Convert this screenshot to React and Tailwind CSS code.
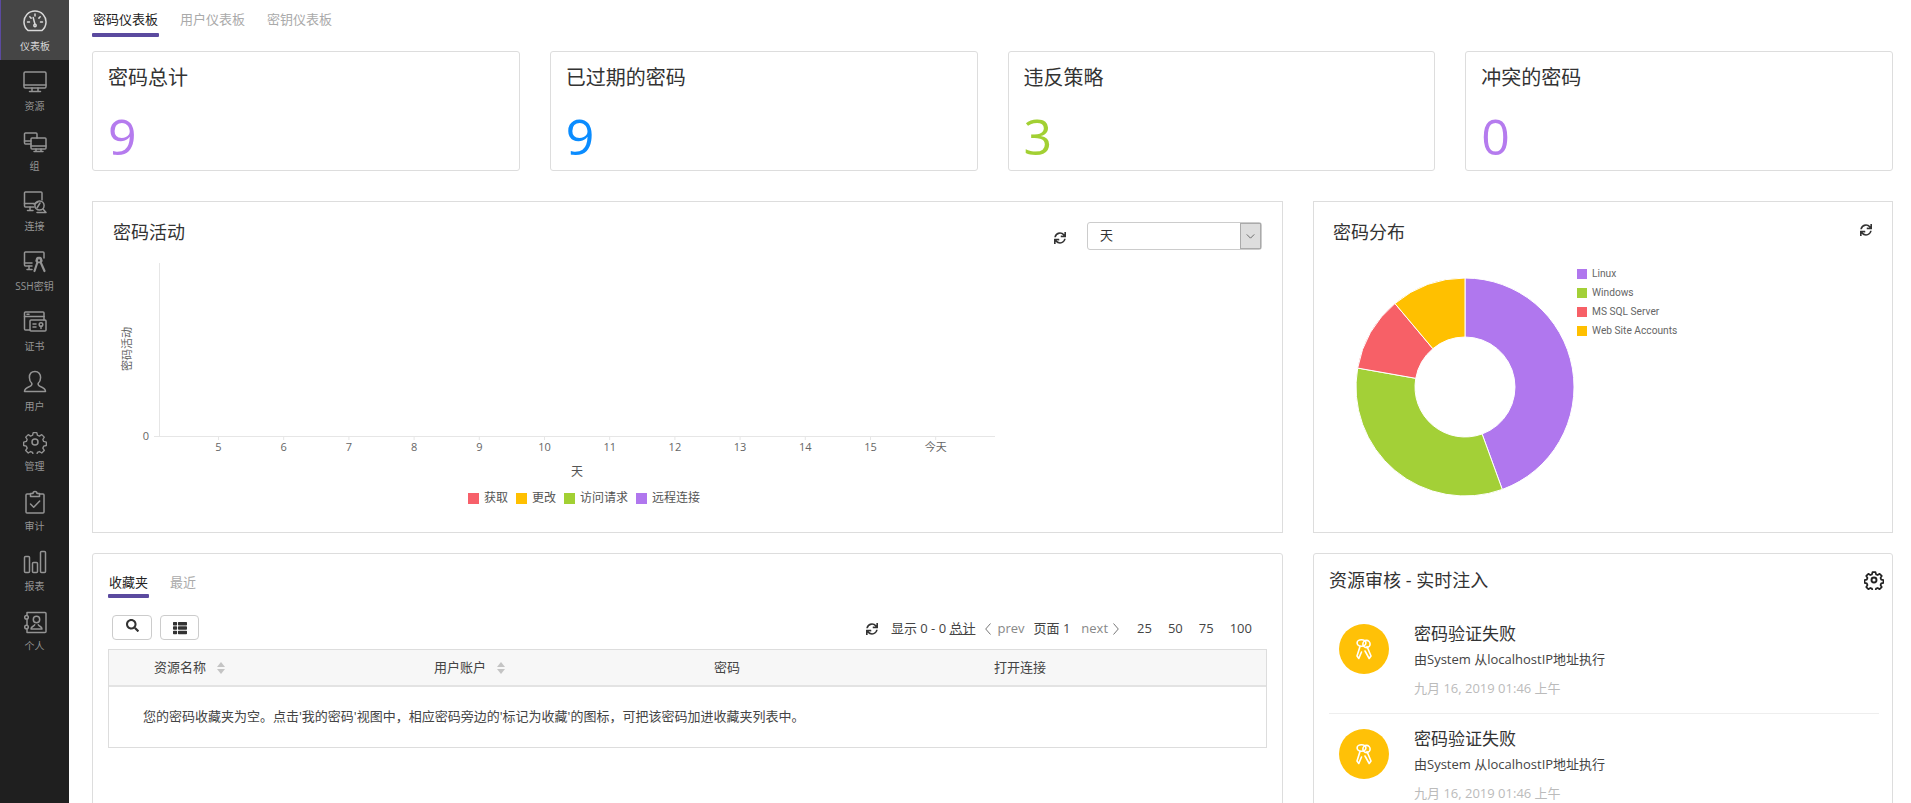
import React from "react";
import { FaSync, FaSearch, FaThList } from "react-icons/fa";

const FONT = "font-['Open_Sans','Noto_Sans_CJK_SC',sans-serif]";

const stroke = {
  fill: "none",
  stroke: "currentColor",
  strokeWidth: 1.5,
  strokeLinecap: "round",
  strokeLinejoin: "round",
};

const GEAR =
  "M10 1.5h4l.7 3 2.2.9 2.6-1.6 2.8 2.8-1.6 2.6.9 2.2 3 .7v3.8l-3 .7-.9 2.2 1.6 2.6-2.8 2.8-2.6-1.6-2.2.9-.7 3h-4l-.7-3-2.2-.9-2.6 1.6-2.8-2.8 1.6-2.6-.9-2.2-3-.7v-3.8l3-.7.9-2.2-1.6-2.6 2.8-2.8 2.6 1.6 2.2-.9z";

const SIDE_ITEMS = [
  {
    label: "仪表板",
    icon: (
      <>
        <path d="M5.2 20.6a11 11 0 1 1 13.6 0z" />
        <path d="M12 4v2M4.5 12h2M17.5 12h2M6.8 6.8l1.3 1.3M17.2 6.8l-1.3 1.3" />
        <path d="M10.2 7.5l1.8 7" />
        <circle cx="12" cy="15.5" r="1.2" />
      </>
    ),
  },
  {
    label: "资源",
    icon: (
      <>
        <rect x="1" y="2" width="22" height="16" rx="1.2" />
        <path d="M1 15h22M9 18v3M15 18v3M6.5 21.5h11" />
      </>
    ),
  },
  {
    label: "组",
    icon: (
      <>
        <path d="M8 14H2.5a1 1 0 0 1-1-1V4a1 1 0 0 1 1-1H13a1 1 0 0 1 1 1v4" />
        <rect x="8" y="8" width="15" height="11" rx="1" />
        <path d="M8 16h15M13 19v2M18 19v2M11 21.5h9M1.5 11H8" />
      </>
    ),
  },
  {
    label: "连接",
    icon: (
      <>
        <path d="M11 17H2.5a1 1 0 0 1-1-1V3a1 1 0 0 1 1-1H18a1 1 0 0 1 1 1v7" />
        <path d="M1.5 13.5H11M7 17v3M4.5 20.5H10" />
        <circle cx="16.5" cy="15.5" r="4.6" />
        <path d="M14 18l3-5M15 12l-4 2M20 19l3 3.5h-9" />
      </>
    ),
  },
  {
    label: "SSH密钥",
    icon: (
      <>
        <path d="M9 16H2.5a1 1 0 0 1-1-1V3a1 1 0 0 1 1-1H20a1 1 0 0 1 1 1v5" />
        <path d="M1.5 13H9M6 16v3M4 19.5h5" />
        <circle cx="16" cy="10" r="2.6" />
        <path d="M14.5 12l-3 9M17.5 12l4 9M15 8l-1.5 3M17 8l1.5 3" strokeWidth="2.2" />
      </>
    ),
  },
  {
    label: "证书",
    icon: (
      <>
        <path d="M7 20H2.5a1 1 0 0 1-1-1V3a1 1 0 0 1 1-1H20a1 1 0 0 1 1 1v7" />
        <path d="M1.5 6.5H21M4 4.3h2" />
        <rect x="7" y="10" width="16" height="11" rx="1" />
        <path d="M10 14h3M10 17h3" />
        <circle cx="18" cy="14.5" r="1.8" />
        <path d="M18 16.3v2.2" />
      </>
    ),
  },
  {
    label: "用户",
    icon: (
      <path d="M12 1.5c-3.6 0-5.6 2.6-5.6 6 0 2.6 1 4.6 2.4 5.8.4 1.6-.2 2.4-1.8 3.1-2.8 1.1-5.5 2-5.5 5.1h21c0-3.1-2.7-4-5.5-5.1-1.6-.7-2.2-1.5-1.8-3.1 1.4-1.2 2.4-3.2 2.4-5.8 0-3.4-2-6-5.6-6z" />
    ),
  },
  {
    label: "管理",
    icon: (
      <>
        <path d={GEAR} transform="translate(1.2 1.2) scale(.9)" />
        <circle cx="12" cy="12" r="3" />
      </>
    ),
  },
  {
    label: "审计",
    icon: (
      <>
        <path d="M7.5 4H4a1 1 0 0 0-1 1v17a1 1 0 0 0 1 1h16a1 1 0 0 0 1-1V5a1 1 0 0 0-1-1h-3.5" />
        <path d="M7.5 6.5V3.5h2.5a2 2 0 0 1 4 0h2.5v3z" />
        <path d="M7.5 14l3.2 3.2 6-6.2" />
      </>
    ),
  },
  {
    label: "报表",
    icon: (
      <>
        <rect x="1.5" y="6.5" width="5" height="16" rx="1" />
        <rect x="9.5" y="12.5" width="5" height="10" rx="1" />
        <rect x="17.5" y="1.5" width="5" height="21" rx="1" />
      </>
    ),
  },
  {
    label: "个人",
    icon: (
      <>
        <path d="M4 5V2.5h18a1 1 0 0 1 1 1v18a1 1 0 0 1-1 1H4V19M4 9.5V15" />
        <circle cx="3.5" cy="7.2" r="1.8" />
        <circle cx="3.5" cy="17" r="1.8" />
        <circle cx="13.5" cy="9.5" r="3.2" />
        <path d="M8 19c0-2.6 3-2.6 3.7-4.2M19 19c0-2.6-3-2.6-3.7-4.2M8 19h11" />
      </>
    ),
  },
];

const STATS = [
  { title: "密码总计", value: "9", color: "text-[#b57bee]" },
  { title: "已过期的密码", value: "9", color: "text-[#0a8cff]" },
  { title: "违反策略", value: "3", color: "text-[#a2d033]" },
  { title: "冲突的密码", value: "0", color: "text-[#b57bee]" },
];

const X_TICKS = ["5", "6", "7", "8", "9", "10", "11", "12", "13", "14", "15", "今天"];

const ACTIVITY_LEGEND = [
  { label: "获取", color: "bg-[#f7606a]" },
  { label: "更改", color: "bg-[#ffc000]" },
  { label: "访问请求", color: "bg-[#a2d033]" },
  { label: "远程连接", color: "bg-[#b077ee]" },
];

const PIE = [
  { label: "Linux", from: 0, to: 160, fill: "#b077ee", color: "bg-[#b077ee]" },
  { label: "Windows", from: 160, to: 280, fill: "#a3d037", color: "bg-[#a3d037]" },
  { label: "MS SQL Server", from: 280, to: 320, fill: "#f76067", color: "bg-[#f76067]" },
  { label: "Web Site Accounts", from: 320, to: 360, fill: "#ffc000", color: "bg-[#ffc000]" },
];

function slicePath(cx, cy, r, r2, from, to) {
  const pt = (rad, deg) => {
    const a = (deg * Math.PI) / 180;
    return `${(cx + rad * Math.sin(a)).toFixed(2)} ${(cy - rad * Math.cos(a)).toFixed(2)}`;
  };
  const large = to - from > 180 ? 1 : 0;
  return `M${pt(r, from)}A${r} ${r} 0 ${large} 1 ${pt(r, to)}L${pt(r2, to)}A${r2} ${r2} 0 ${large} 0 ${pt(r2, from)}Z`;
}

function Sidebar() {
  return (
    <div className="w-[69px] shrink-0 bg-[#1f1f1f]">
      {SIDE_ITEMS.map((item, i) => (
        <div
          key={item.label}
          className={`h-[60px] flex flex-col items-center pt-[10px] ${
            i === 0 ? "bg-[#454545] border-l border-[#5b4a9f] text-[#d8d8d8]" : "text-[#949494]"
          }`}
        >
          <svg viewBox="0 0 24 24" {...stroke} className="w-[24px] h-[24px] shrink-0">
            {item.icon}
          </svg>
          <span className="text-[10px] leading-[14px] mt-[5px]">{item.label}</span>
        </div>
      ))}
    </div>
  );
}

function Tab({ label, active }) {
  return (
    <div className={`w-[67px] text-center ${active ? "text-[#222]" : "text-[#aaa]"}`}>
      <div className="text-[13px] leading-[18px]">{label}</div>
      {active && <div className="h-[4px] mt-[5px] rounded-[1px] bg-[#5b4a9f]" />}
    </div>
  );
}

function StatCard({ title, value, color }) {
  return (
    <div className="flex-1 h-[120px] border border-[#ddd] rounded-[3px] px-[15px] pt-[15px]">
      <div className="text-[20px] leading-[22px] text-[#333]">{title}</div>
      <div className={`text-[50px] leading-[50px] font-normal mt-[22px] ${color}`}>{value}</div>
    </div>
  );
}

function ActivityChart() {
  return (
    <svg className="block w-[930px] h-[228px]" viewBox="0 0 930 228">
      <path d="M66.5 8V181.5H902M61 181.5h6" fill="none" stroke="#e6e6e6" />
      <text x="53" y="185" fontSize="11" textAnchor="middle" fill="#666">0</text>
      <text transform="translate(38 94) rotate(-90)" fontSize="11" textAnchor="middle" fill="#666">密码活动</text>
      {X_TICKS.map((t, i) => {
        const x = 125.5 + i * 65.2;
        return (
          <g key={t}>
            <path d={`M${x} 181v4`} stroke="#e6e6e6" />
            <text x={x} y="196" fontSize="11" textAnchor="middle" fill="#666">{t}</text>
          </g>
        );
      })}
      <text x="484" y="221" fontSize="12" textAnchor="middle" fill="#555">天</text>
    </svg>
  );
}

function ActivityCard() {
  return (
    <div className="w-[1191px] h-[332px] border border-[#ddd] pt-[19px]">
      <div className="flex justify-between pl-[20px] pr-[20px]">
        <div className="text-[18px] leading-[22px] text-[#333]">密码活动</div>
        <div className="flex items-center h-[28px] mt-[1px]">
          <FaSync className="w-[12px] h-[12px] text-[#333] mr-[21px] mt-[4px]" />
          <div className="w-[175px] h-[28px] border border-[#ccc] rounded-[3px] flex items-stretch">
            <div className="flex-1 pl-[12px] text-[13px] leading-[24px] text-[#333]">天</div>
            <div className="w-[21px] bg-[#ddd] border border-[#aaa] flex items-center justify-center">
              <svg viewBox="0 0 10 6" className="w-[9px] h-[5px]" fill="none" stroke="#555">
                <path d="M.5.5L5 5 9.5.5" />
              </svg>
            </div>
          </div>
        </div>
      </div>
      <div className="mt-[5px]">
        <ActivityChart />
      </div>
      <div className="ml-[73px] w-[836px] flex justify-center gap-[8px] mt-[7px]">
        {ACTIVITY_LEGEND.map((l) => (
          <div key={l.label} className="flex items-center gap-[5px] text-[12px] leading-[16px] text-[#555]">
            <span className={`w-[11px] h-[11px] ${l.color}`} />
            {l.label}
          </div>
        ))}
      </div>
    </div>
  );
}

function DistributionCard() {
  return (
    <div className="flex-1 h-[332px] border border-[#ddd] pt-[19px]">
      <div className="flex justify-between items-start pl-[19px] pr-[20px]">
        <div className="text-[18px] leading-[22px] text-[#333]">密码分布</div>
        <FaSync className="w-[12px] h-[12px] text-[#333] mt-[3px]" />
      </div>
      <div className="flex mt-[12px]">
        <svg className="block w-[263px] h-[250px]" viewBox="0 0 263 250">
          {PIE.map((p) => (
            <path
              key={p.label}
              d={slicePath(151, 132, 109, 50, p.from, p.to)}
              fill={p.fill}
              stroke="#fff"
              strokeWidth="1"
            />
          ))}
        </svg>
        <div className="pt-[9px]">
          {PIE.map((p) => (
            <div key={p.label} className="flex items-center h-[19px] gap-[5px] font-['Roboto',sans-serif] text-[10.2px] text-[#666]">
              <span className={`w-[10px] h-[10px] ${p.color}`} />
              {p.label}
            </div>
          ))}
        </div>
      </div>
    </div>
  );
}

function Chevron({ left }) {
  return (
    <svg viewBox="0 0 6 12" className="w-[6px] h-[12px]" fill="none" stroke="#777">
      <path d={left ? "M5.5 .5L.7 6l4.8 5.5" : "M.5 .5L5.3 6 .5 11.5"} />
    </svg>
  );
}

function HeaderCell({ label, sortable }) {
  return (
    <div className="w-[280px] shrink-0 flex items-center gap-[11px]">
      {label}
      {sortable && (
        <svg viewBox="0 0 8 12" className="w-[8px] h-[12px]" fill="#c4c4c4">
          <path d="M4 0l4 5H0zM4 12L0 7h8z" />
        </svg>
      )}
    </div>
  );
}

function FavoritesCard() {
  return (
    <div className="w-[1191px] h-[300px] border border-[#ddd] rounded-t-[3px] pt-[19px] px-[15px]">
      <div className="flex gap-[21px]">
        <div className="w-[41px] text-center text-[#222]">
          <div className="text-[13px] leading-[18px]">收藏夹</div>
          <div className="h-[4px] mt-[3px] rounded-[1px] bg-[#5b4a9f]" />
        </div>
        <div className="text-[13px] leading-[18px] text-[#aaa]">最近</div>
      </div>
      <div className="flex justify-between items-center mt-[17px] h-[25px] pl-[4px] pr-[15px]">
        <div className="flex gap-[8px]">
          <div className="w-[40px] h-[25px] border border-[#ccc] rounded-[4px] flex justify-center pt-[3px]">
            <FaSearch className="w-[13px] h-[13px] text-[#333]" />
          </div>
          <div className="w-[39px] h-[25px] border border-[#ccc] rounded-[4px] flex items-center justify-center">
            <FaThList className="w-[14px] h-[14px] text-[#333]" />
          </div>
        </div>
        <div className="flex items-center text-[13px] text-[#444] mt-[3px]">
          <FaSync className="w-[12px] h-[12px] text-[#333] mr-[13px]" />
          <span>显示 0 - 0 <span className="underline">总计</span></span>
          <span className="ml-[10px] flex items-center gap-[6px] text-[#888]">
            <Chevron left />
            prev
          </span>
          <span className="ml-[9px]">页面 1</span>
          <span className="ml-[11px] flex items-center gap-[5px] text-[#888]">
            next
            <Chevron />
          </span>
          <span className="ml-[18px]">25</span>
          <span className="ml-[16px]">50</span>
          <span className="ml-[16px]">75</span>
          <span className="ml-[16px]">100</span>
        </div>
      </div>
      <div className="mt-[9px] border border-[#ddd] text-[13px] text-[#444] overflow-hidden">
        <div className="h-[37px] bg-[#f7f7f7] border-b-2 border-[#e3e3e3] pl-[45px] flex items-center">
          <HeaderCell label="资源名称" sortable />
          <HeaderCell label="用户账户" sortable />
          <HeaderCell label="密码" />
          <HeaderCell label="打开连接" />
        </div>
        <div className="h-[60px] pl-[34px] flex items-center">
          您的密码收藏夹为空。点击'我的密码'视图中，相应密码旁边的'标记为收藏'的图标，可把该密码加进收藏夹列表中。
        </div>
      </div>
    </div>
  );
}

function KeysIcon() {
  return (
    <svg viewBox="0 0 20 22" className="w-[20px] h-[22px]" fill="none" stroke="#fff" strokeWidth="1.6" strokeLinecap="round" strokeLinejoin="round">
      <path d="M6 8.5L3 18l1.8 2.5L7.5 14" />
      <path d="M13 8.5L17 18l-1.8 2.5L11 13" />
      <ellipse cx="7.5" cy="5" rx="4.4" ry="3.2" />
      <circle cx="12.5" cy="6" r="3.6" />
    </svg>
  );
}

function AuditItem({ last }) {
  return (
    <div className={`flex pt-[15px] pb-[15px] pl-[10px] ${last ? "" : "border-b border-[#eee]"}`}>
      <div className="w-[50px] h-[50px] rounded-full bg-[#ffc107] flex items-center justify-center shrink-0">
        <KeysIcon />
      </div>
      <div className="ml-[25px]">
        <div className="text-[17px] leading-[20px] text-[#333]">密码验证失败</div>
        <div className="text-[13px] leading-[20px] mt-[5px] text-[#444]">由System 从localhostIP地址执行</div>
        <div className="text-[13px] leading-[20px] mt-[9px] text-[#bbb]">九月 16, 2019 01:46 上午</div>
      </div>
    </div>
  );
}

function AuditCard() {
  return (
    <div className="flex-1 h-[300px] border border-[#ddd] rounded-t-[3px] pt-[15px] pl-[15px] pr-[13px]">
      <div className="flex justify-between items-center h-[22px] mb-[18px]">
        <div className="text-[18px] leading-[22px] text-[#333]">资源审核 - 实时注入</div>
        <svg viewBox="0 0 24 24" {...stroke} strokeWidth="2.3" className="w-[20px] h-[20px] -mr-[5px] text-[#222]">
          <path d={GEAR} transform="translate(1.2 1.2) scale(.9)" />
          <circle cx="12" cy="12" r="3" />
        </svg>
      </div>
      <AuditItem />
      <AuditItem last />
    </div>
  );
}

export default function App() {
  return (
    <div className={`h-[803px] w-[1911px] overflow-hidden flex bg-white ${FONT}`}>
      <Sidebar />
      <div className="flex-1 pl-[23px] pr-[18px] pt-[10px]">
        <div className="flex gap-[20px] h-[41px]">
          <Tab label="密码仪表板" active />
          <Tab label="用户仪表板" />
          <Tab label="密钥仪表板" />
        </div>
        <div className="flex gap-[30px]">
          {STATS.map((s) => (
            <StatCard key={s.title} {...s} />
          ))}
        </div>
        <div className="flex gap-[30px] mt-[30px]">
          <ActivityCard />
          <DistributionCard />
        </div>
        <div className="flex gap-[30px] mt-[20px]">
          <FavoritesCard />
          <AuditCard />
        </div>
      </div>
    </div>
  );
}
